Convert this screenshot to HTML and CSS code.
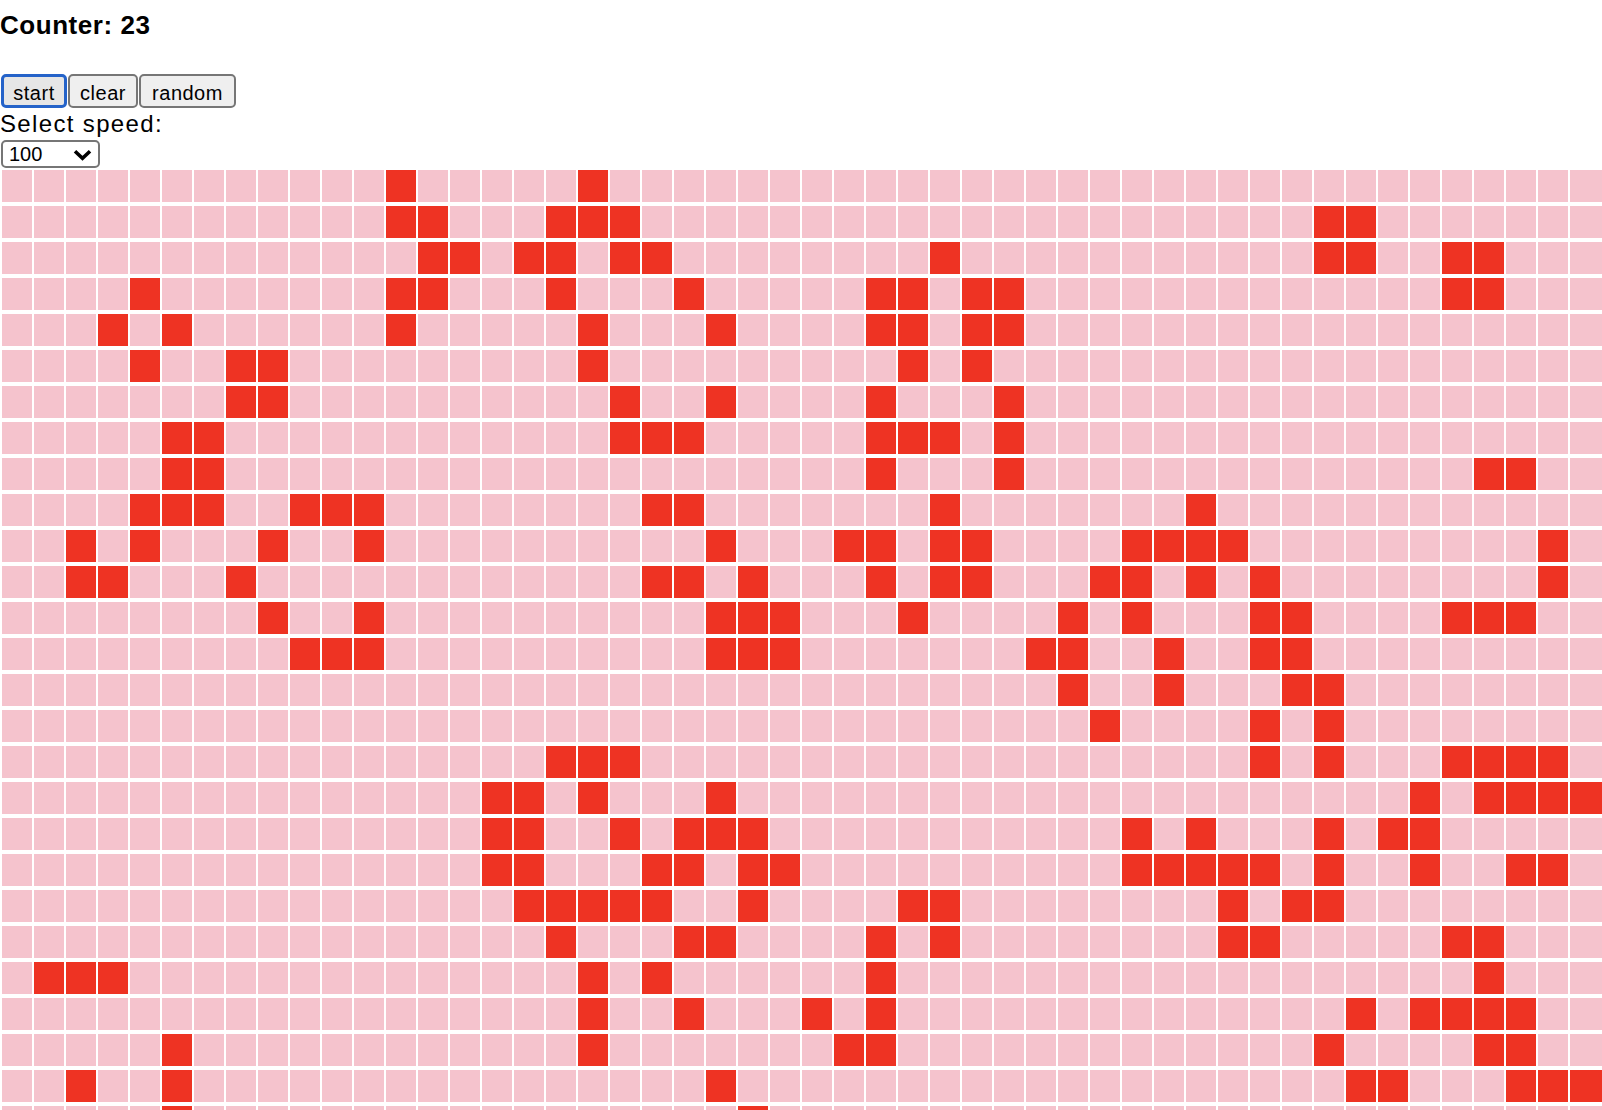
FILE: index.html
```html
<!DOCTYPE html>
<html lang="en">
<head>
<meta charset="utf-8">
<title>Game of Life</title>
<link rel="stylesheet" href="styles.css">
</head>
<body>
<h3 class="counter">Counter: 23</h3>
<div class="controls">
  <button class="btn btn-start" type="button">start</button>
  <button class="btn btn-clear" type="button">clear</button>
  <button class="btn btn-random" type="button">random</button>
</div>
<label class="speed-label" for="speed">Select speed:</label>
<div class="select-wrap">
  <select class="speed" id="speed"><option>100</option><option>200</option><option>500</option></select>
  <svg class="chevron" viewBox="0 0 19 12" aria-hidden="true"><path d="M2 2.2l7.5 7 7.5-7" fill="none" stroke="#000" stroke-width="3.6"/></svg>
</div>
<div class="board" id="board"></div>
<script src="script.js"></script>
</body>
</html>
```
FILE: styles.css
```css
html, body { margin: 0; padding: 0; height: 1110px; overflow: hidden; background: #fff; }
body { font-family: "Liberation Sans", Arial, sans-serif; color: #000; }
.counter { margin: 0; padding-top: 11px; height: 74px; box-sizing: border-box; font-size: 26px; line-height: 28px; letter-spacing: 0.55px; font-weight: 700; }
.controls { display: flex; gap: 1px; padding-left: 1px; height: 34px; }
.btn { box-sizing: border-box; height: 34px; padding: 3px 0 0; border: 2px solid #767676; border-radius: 5px; background: #efefef; color: #000; font: 400 20px/1 "Liberation Sans", Arial, sans-serif; letter-spacing: 0.5px; }
.btn-start { width: 66px; border: 3px solid #2563c9; background: #e6e6e6; }
.btn-clear { width: 70px; }
.btn-random { width: 97px; }
.speed-label { display: block; height: 32px; font-size: 24px; line-height: 32px; letter-spacing: 1.35px; }
.select-wrap { position: relative; width: 99px; height: 28px; margin-left: 1px; }
.speed { appearance: none; display: block; box-sizing: border-box; width: 99px; height: 28px; padding: 0 0 0 6px; border: 2px solid #767676; border-radius: 5px; background: #fff; color: #000; font: 400 20px/1 "Liberation Sans", Arial, sans-serif; }
.chevron { position: absolute; left: 72px; top: 9px; width: 19px; height: 12px; }
.board { display: grid; grid-template-columns: repeat(49, 30px) 32px; grid-auto-rows: 32px; gap: 4px 2px; padding-left: 2px; margin-top: 2px; }
.cell { background: #f5c3cd; }
.alive { background: #ee3323; }
```
FILE: script.js
```js
var LIVE = [
  [12,18],
  [12,13,17,18,19,41,42],
  [13,14,16,17,19,20,29,41,42,45,46],
  [4,12,13,17,21,27,28,30,31,45,46],
  [3,5,12,18,22,27,28,30,31],
  [4,7,8,18,28,30],
  [7,8,19,22,27,31],
  [5,6,19,20,21,27,28,29,31],
  [5,6,27,31,46,47],
  [4,5,6,9,10,11,20,21,29,37],
  [2,4,8,11,22,26,27,29,30,35,36,37,38,48],
  [2,3,7,20,21,23,27,29,30,34,35,37,39,48],
  [8,11,22,23,24,28,33,35,39,40,45,46,47],
  [9,10,11,22,23,24,32,33,36,39,40],
  [33,36,40,41],
  [34,39,41],
  [17,18,19,39,41,45,46,47,48],
  [15,16,18,22,44,46,47,48,49],
  [15,16,19,21,22,23,35,37,41,43,44],
  [15,16,20,21,23,24,35,36,37,38,39,41,44,47,48],
  [16,17,18,19,20,23,28,29,38,40,41],
  [17,21,22,27,29,38,39,45,46],
  [1,2,3,18,20,27,46],
  [18,21,25,27,42,44,45,46,47],
  [5,18,26,27,41,46,47],
  [2,5,22,42,43,47,48,49],
  [5,23]
];
var board = document.getElementById('board');
LIVE.forEach(function (row) {
  for (var c = 0; c < 50; c++) {
    var cell = document.createElement('div');
    cell.className = row.indexOf(c) >= 0 ? 'cell alive' : 'cell';
    board.appendChild(cell);
  }
});
```
